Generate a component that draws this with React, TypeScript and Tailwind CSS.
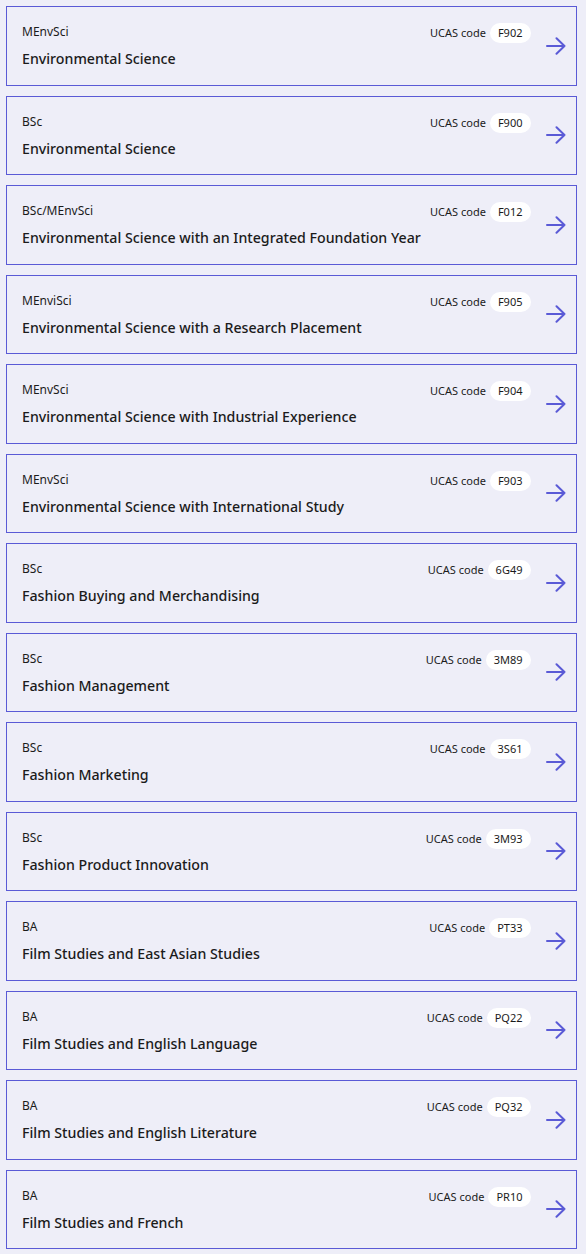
import React from "react";

type Course = { degree: string; title: string; code: string };

const courses: Course[] = [
  { degree: "MEnvSci", title: "Environmental Science", code: "F902" },
  { degree: "BSc", title: "Environmental Science", code: "F900" },
  { degree: "BSc/MEnvSci", title: "Environmental Science with an Integrated Foundation Year", code: "F012" },
  { degree: "MEnviSci", title: "Environmental Science with a Research Placement", code: "F905" },
  { degree: "MEnvSci", title: "Environmental Science with Industrial Experience", code: "F904" },
  { degree: "MEnvSci", title: "Environmental Science with International Study", code: "F903" },
  { degree: "BSc", title: "Fashion Buying and Merchandising", code: "6G49" },
  { degree: "BSc", title: "Fashion Management", code: "3M89" },
  { degree: "BSc", title: "Fashion Marketing", code: "3S61" },
  { degree: "BSc", title: "Fashion Product Innovation", code: "3M93" },
  { degree: "BA", title: "Film Studies and East Asian Studies", code: "PT33" },
  { degree: "BA", title: "Film Studies and English Language", code: "PQ22" },
  { degree: "BA", title: "Film Studies and English Literature", code: "PQ32" },
  { degree: "BA", title: "Film Studies and French", code: "PR10" },
];

function Arrow() {
  return (
    <svg width="20" height="18" viewBox="0 0 20 18" fill="none" className="shrink-0">
      <path d="M1 9h17.5M10.5 1.2 18.5 9l-8 7.8" stroke="#5a5ad6" strokeWidth="2" strokeLinecap="round" strokeLinejoin="round" />
    </svg>
  );
}

function CourseCard({ c }: { c: Course }) {
  return (
    <a className="flex h-[79.5px] items-center border border-[#5a5ad6] pl-[15px] pr-[10px] text-[#1b1b1b]">
      <div className="flex-1">
        <div className="flex h-[20px] items-center justify-between">
          <span className="text-[12px] leading-[18px]">{c.degree}</span>
          <div className="mt-[2px] flex items-center gap-[4px]">
            <span className="text-[11px] leading-[18px]">UCAS code</span>
            <span className="flex h-[20px] items-center rounded-full bg-white px-[8px] text-[11px]">{c.code}</span>
          </div>
        </div>
        <div className="mt-[7px] text-[14.2px] font-medium leading-[20px]">{c.title}</div>
      </div>
      <div className="ml-[15px] flex items-center">
        <Arrow />
      </div>
    </a>
  );
}

export default function App() {
  return (
    <div className="min-h-[1254px] bg-[#eeeef8] pt-[6px] pl-[6px] pr-[9.5px]" style={{ fontFamily: '"Noto Sans", "Open Sans", sans-serif' }}>
      <div className="flex flex-col gap-[10px]">
        {courses.map((c, i) => (
          <CourseCard key={i} c={c} />
        ))}
      </div>
    </div>
  );
}
